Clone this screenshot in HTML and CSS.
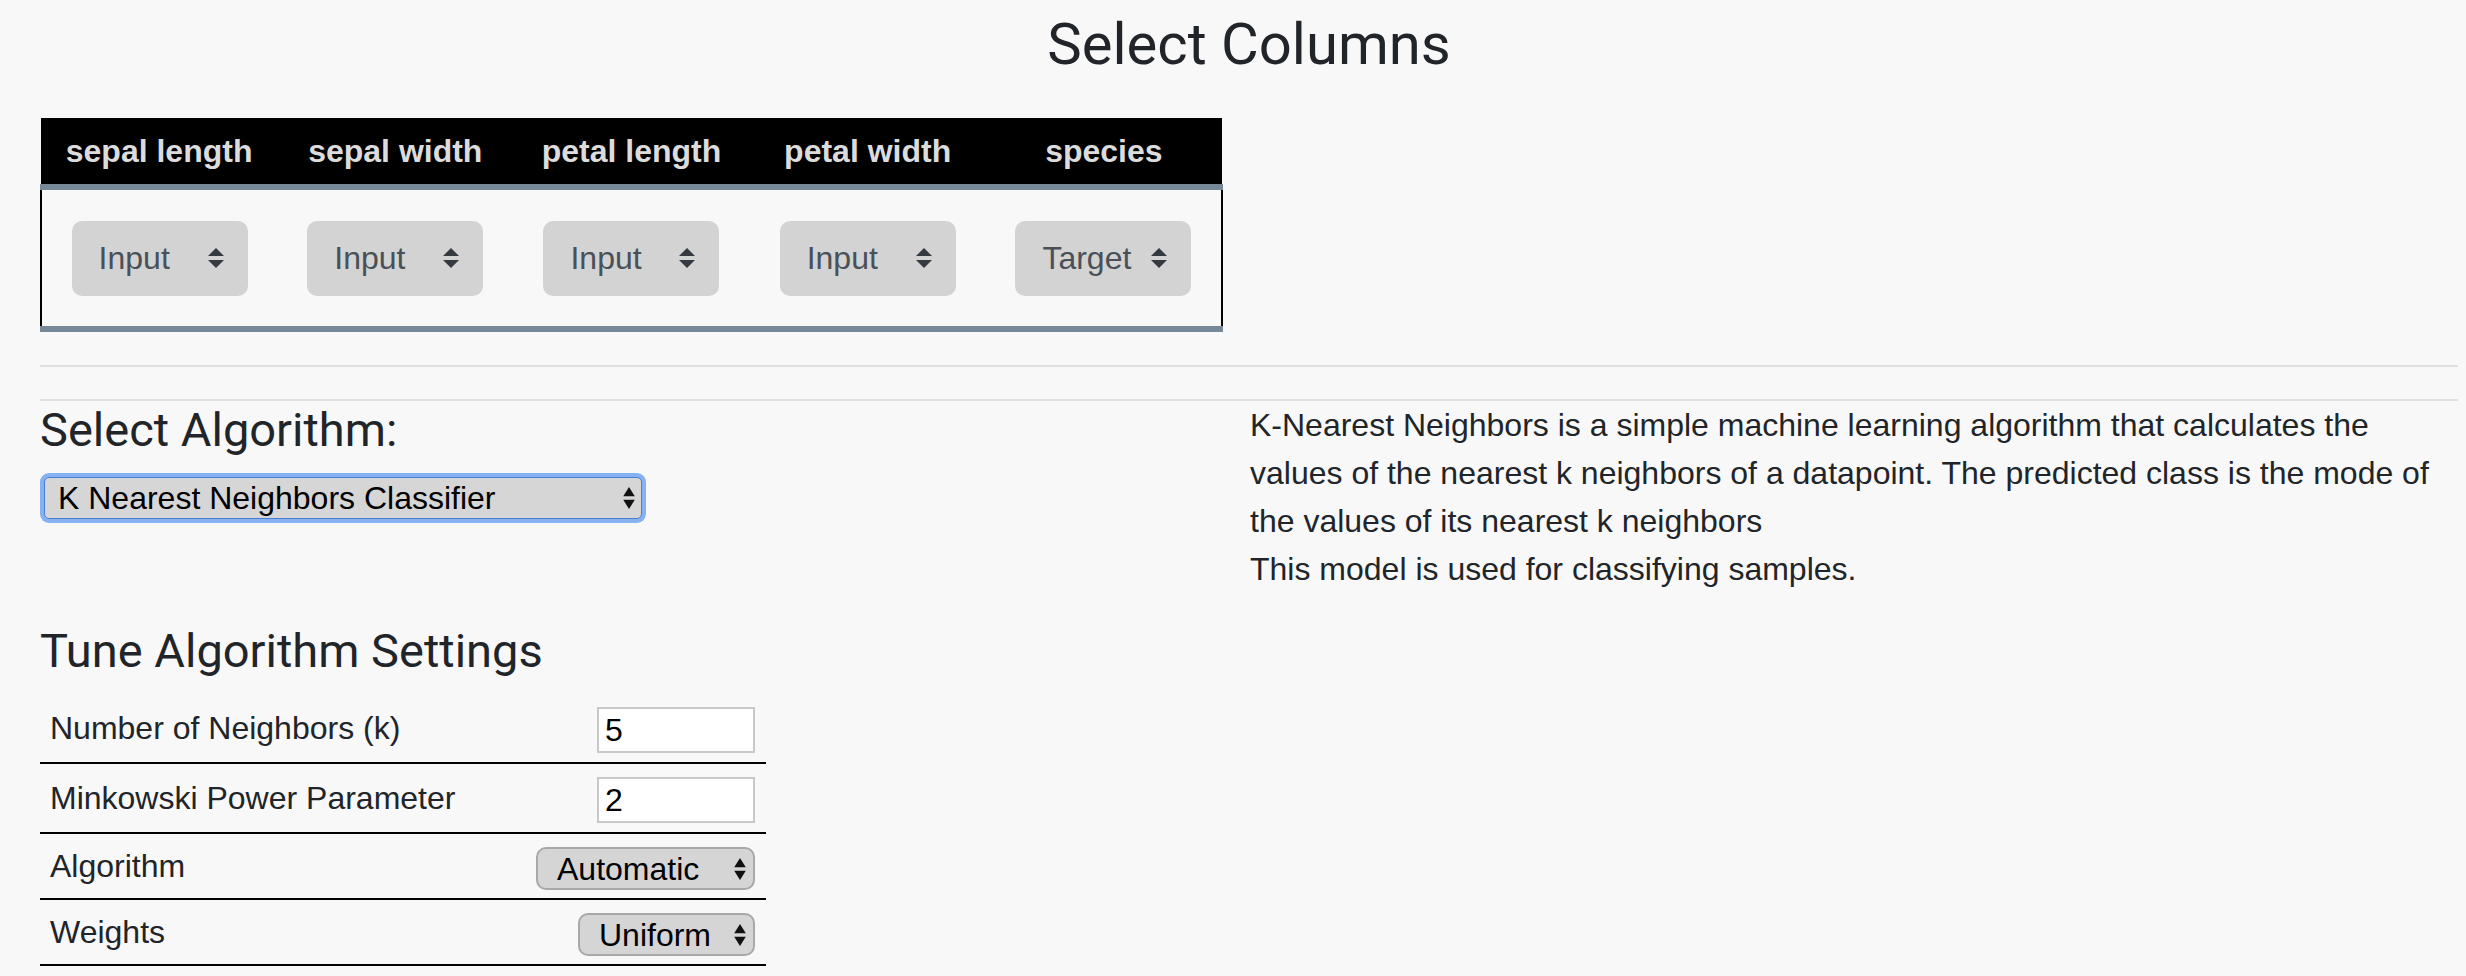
FILE: index.html
```html
<!DOCTYPE html>
<html lang="en">
<head>
<meta charset="utf-8">
<title>Select Columns</title>
<link rel="stylesheet" href="styles.css">
</head>
<body>
<div class="page">
  <h2 class="title">Select Columns</h2>

  <table class="cols">
    <thead>
      <tr>
        <th>sepal length</th>
        <th>sepal width</th>
        <th>petal length</th>
        <th>petal width</th>
        <th>species</th>
      </tr>
    </thead>
    <tbody>
      <tr>
        <td><div class="csel"><span>Input</span><svg class="carrow" viewBox="0 0 4 5"><path d="M2 0L0 2h4zm0 5L0 3h4z"/></svg></div></td>
        <td><div class="csel"><span>Input</span><svg class="carrow" viewBox="0 0 4 5"><path d="M2 0L0 2h4zm0 5L0 3h4z"/></svg></div></td>
        <td><div class="csel"><span>Input</span><svg class="carrow" viewBox="0 0 4 5"><path d="M2 0L0 2h4zm0 5L0 3h4z"/></svg></div></td>
        <td><div class="csel"><span>Input</span><svg class="carrow" viewBox="0 0 4 5"><path d="M2 0L0 2h4zm0 5L0 3h4z"/></svg></div></td>
        <td><div class="csel csel-target"><span>Target</span><svg class="carrow" viewBox="0 0 4 5"><path d="M2 0L0 2h4zm0 5L0 3h4z"/></svg></div></td>
      </tr>
    </tbody>
  </table>

  <hr class="rule rule-first">
  <hr class="rule">

  <div class="split">
    <div class="left">
      <h4 class="heading">Select Algorithm:</h4>
      <div class="algo-select">
        <span>K Nearest Neighbors Classifier</span>
        <svg class="marrow" viewBox="0 0 12 24"><path d="M6 1L11.8 10.2H0.2z"/><path d="M6 23L0.2 13.8H11.8z"/></svg>
      </div>

      <h4 class="heading tune">Tune Algorithm Settings</h4>
      <table class="settings">
        <tr class="inrow">
          <td class="lbl">Number of Neighbors (k)</td>
          <td class="ctl"><div class="numbox">5</div></td>
        </tr>
        <tr class="inrow">
          <td class="lbl">Minkowski Power Parameter</td>
          <td class="ctl"><div class="numbox">2</div></td>
        </tr>
        <tr class="selrow">
          <td class="lbl">Algorithm</td>
          <td class="ctl"><div class="msel msel-auto"><span>Automatic</span><svg class="marrow" viewBox="0 0 12 24"><path d="M6 1L11.8 10.2H0.2z"/><path d="M6 23L0.2 13.8H11.8z"/></svg></div></td>
        </tr>
        <tr class="selrow">
          <td class="lbl">Weights</td>
          <td class="ctl"><div class="msel msel-uni"><span>Uniform</span><svg class="marrow" viewBox="0 0 12 24"><path d="M6 1L11.8 10.2H0.2z"/><path d="M6 23L0.2 13.8H11.8z"/></svg></div></td>
        </tr>
      </table>
    </div>
    <div class="right">
      <p class="desc">K-Nearest Neighbors is a simple machine learning algorithm that calculates the values of the nearest k neighbors of a datapoint. The predicted class is the mode of the values of its nearest k neighbors</p>
      <p class="desc">This model is used for classifying samples.</p>
    </div>
  </div>
</div>
</body>
</html>
```

FILE: styles.css
```css
html, body {
  margin: 0;
  padding: 0;
  background: #f8f8f8;
}

body {
  font-family: "Liberation Sans", Arial, sans-serif;
  font-size: 32px;
  line-height: 48px;
  color: #212529;
}

.page {
  padding: 9px 8px 0 40px;
}

.title {
  margin: 0 0 39px;
  font-family: Roboto, "Liberation Sans", sans-serif;
  font-size: 58px;
  font-weight: 400;
  line-height: 70px;
  text-align: center;
  color: #212529;
}

/* ---------- column table ---------- */
.cols {
  width: 1183px;
  border-collapse: collapse;
  table-layout: fixed;
}

.cols th {
  height: 66px;
  padding: 0;
  background: #000;
  color: #dcdcdc;
  font-weight: 700;
  font-size: 32px;
  line-height: 40px;
  text-align: center;
  vertical-align: middle;
  border-bottom: 6px solid #778899;
}

.cols td {
  height: 136px;
  padding: 0;
  text-align: center;
  vertical-align: middle;
  border-bottom: 6px solid #778899;
}

.cols td:first-child {
  border-left: 2px solid #000;
}

.cols td:last-child {
  border-right: 2px solid #000;
}

.csel {
  display: inline-flex;
  align-items: center;
  justify-content: space-between;
  box-sizing: border-box;
  width: 176px;
  height: 75px;
  padding: 0 24px 0 27px;
  background: #d3d3d3;
  border-radius: 10px;
  color: #495057;
  font-size: 32px;
  vertical-align: middle;
}

.carrow {
  width: 16px;
  height: 20px;
  fill: #343a40;
}

/* ---------- rules ---------- */
.rule {
  margin: 0;
  border: 0;
  border-top: 2px solid #e0e0e0;
  height: 0;
}

.rule-first {
  margin-top: 33px;
  margin-bottom: 32px;
}

/* ---------- split ---------- */
.split {
  display: grid;
  grid-template-columns: 1210px 1fr;
}

.heading {
  margin: 0;
  font-family: Roboto, "Liberation Sans", sans-serif;
  font-size: 47px;
  font-weight: 400;
  line-height: 57px;
  color: #212529;
}

.algo-select {
  display: flex;
  align-items: center;
  justify-content: space-between;
  box-sizing: border-box;
  width: 598px;
  height: 42px;
  margin: 19px 0 0 4px;
  padding: 0 6px 0 13px;
  background: #d6d6d6;
  border: 1px solid #4a7fd0;
  border-radius: 5px;
  box-shadow: 0 0 0 4px #87b2f2;
  color: #000;
  font-size: 32px;
  line-height: 40px;
}

.marrow {
  width: 12px;
  height: 24px;
  fill: #111;
}

.tune {
  margin-top: 103px;
  margin-bottom: 15px;
}

/* ---------- settings table ---------- */
.settings {
  width: 726px;
  border-collapse: collapse;
}

.settings td {
  border-bottom: 2px solid #000;
  padding: 0;
  vertical-align: middle;
}

.settings .lbl {
  padding-left: 10px;
  color: #212529;
}

.settings .ctl {
  padding-right: 11px;
  text-align: right;
}

.inrow td {
  height: 68px;
}

.selrow td {
  height: 64px;
}

.numbox {
  display: inline-block;
  box-sizing: border-box;
  width: 158px;
  height: 46px;
  padding: 0 6px;
  background: #fff;
  border: 2px solid #c8c8c8;
  color: #000;
  text-align: left;
  line-height: 42px;
  vertical-align: middle;
}

.msel {
  display: inline-flex;
  align-items: center;
  justify-content: space-between;
  box-sizing: border-box;
  height: 43px;
  padding: 0 7px 0 19px;
  background: #d5d5d5;
  border: 2px solid #a8a8a8;
  border-radius: 10px;
  color: #000;
  text-align: left;
  vertical-align: middle;
}

.msel-auto {
  width: 219px;
}

.msel-uni {
  width: 177px;
}

/* ---------- right column ---------- */
.desc {
  margin: 0;
  font-size: 32px;
  line-height: 48px;
  color: #212529;
}
```
